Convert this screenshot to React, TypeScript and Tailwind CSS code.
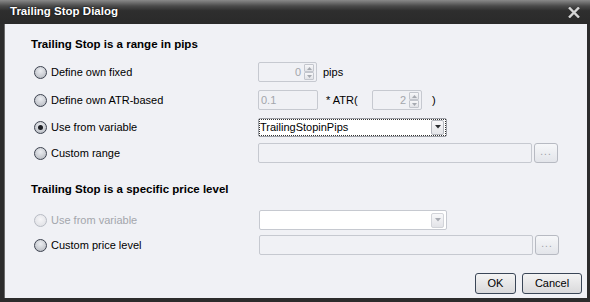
import React from "react";

const font = { fontFamily: '"Liberation Sans", Arial, sans-serif' };

function Radio({ checked = false, disabled = false }: { checked?: boolean; disabled?: boolean }) {
  return (
    <div
      className={
        "w-[13px] h-[13px] rounded-full border flex items-center justify-center shrink-0 " +
        (disabled
          ? "border-[#b8bcc4] bg-[radial-gradient(circle_at_50%_40%,#f6f6f8,#dcdde2)]"
          : "border-[#3d4350] bg-[radial-gradient(circle_at_50%_35%,#eceef2_0%,#c3c6cc_70%,#9ea2aa_100%)]")
      }
    >
      {checked && <div className="w-[5px] h-[5px] rounded-full bg-[#1d1f24]" />}
    </div>
  );
}

function SpinButtons() {
  return (
    <div className="flex flex-col gap-0 mr-[2px]">
      {[0, 1].map((i) => (
        <div
          key={i}
          className="w-[10px] h-[8px] border border-[#c3c6cd] rounded-[1px] bg-gradient-to-b from-[#f7f7f9] to-[#e2e3e7] flex items-center justify-center"
        >
          <svg width="5" height="3" viewBox="0 0 5 3">
            {i === 0 ? (
              <path d="M0 3 L2.5 0 L5 3 Z" fill="#a6a9b0" />
            ) : (
              <path d="M0 0 L2.5 3 L5 0 Z" fill="#a6a9b0" />
            )}
          </svg>
        </div>
      ))}
    </div>
  );
}

function SpinBox({ value, w }: { value: string; w: string }) {
  return (
    <div className={`${w} h-[20px] border border-[#c6c9d0] rounded-[2px] flex items-center justify-end bg-[#f0f1f5]`}>
      <span className="text-[#a3a6ac] text-[11px] mr-[3px]">{value}</span>
      <SpinButtons />
    </div>
  );
}

function DropArrow({ disabled = false }: { disabled?: boolean }) {
  return (
    <div
      className={
        "w-[13px] h-[15px] border rounded-[2px] flex items-center justify-center bg-gradient-to-b from-[#f8f8fa] to-[#e3e4e8] " +
        (disabled ? "border-[#d2d4d9]" : "border-[#b4b7be]")
      }
    >
      <svg width="6" height="4" viewBox="0 0 6 4">
        <path d="M0 0 L6 0 L3 3.5 Z" fill={disabled ? "#a9acb3" : "#2a2c30"} />
      </svg>
    </div>
  );
}

function Row({
  label,
  checked,
  disabled,
  className,
  children,
}: {
  label: string;
  checked?: boolean;
  disabled?: boolean;
  className?: string;
  children?: React.ReactNode;
}) {
  return (
    <div className={"flex items-center h-[20px] " + (className ?? "")}>
      <div className="w-[224px] flex items-center gap-[4px] shrink-0">
        <Radio checked={checked} disabled={disabled} />
        <span className={"text-[11px] " + (disabled ? "text-[#a3a6ac]" : "text-black")}>{label}</span>
      </div>
      {children}
    </div>
  );
}

function EllipsisBtn() {
  return (
    <div className="w-[24px] h-[20px] ml-[2px] border border-[#b7bac2] rounded-[3px] bg-gradient-to-b from-[#f6f7f9] to-[#e3e5ea] flex items-center justify-center">
      <span className="text-[#9a9da5] text-[10px] leading-none tracking-[1px] -mt-[2px]">...</span>
    </div>
  );
}

function WideInput() {
  return <div className="w-[274px] h-[20px] border border-[#c6c9d0] rounded-[2px] bg-[#f0f1f5]" />;
}

export default function App() {
  return (
    <div className="w-[590px] h-[302px] flex flex-col bg-[#2c2c2c]" style={font}>
      <div className="h-[24px] shrink-0 flex items-center justify-between pl-[10px] pr-[10px] bg-[linear-gradient(to_bottom,#8a8a8a_0%,#4a4a4a_25%,#2e2e2e_45%,#2a2a2a_100%)]">
        <span className="text-white font-bold text-[11.5px] [text-shadow:0_0_2px_#000]">Trailing Stop Dialog</span>
        <svg width="12" height="11" viewBox="0 0 12 11" className="mt-[1px]">
          <path d="M1 0.5 L11 10.5 M11 0.5 L1 10.5" stroke="#d6d6d6" strokeWidth="2.4" />
        </svg>
      </div>
      <div className="flex-1 ml-[4px] mr-[3px] mb-[4px] bg-[#f0f1f5] border-l border-[#6a6a6a] pl-[29px] pr-[5px] pt-[13px] flex flex-col">
        <div className="font-bold text-[11.5px] leading-[14px] text-black -ml-[3px]">Trailing Stop is a range in pips</div>

        <Row label="Define own fixed" className="mt-[11px]">
          <SpinBox value="0" w="w-[59px]" />
          <span className="text-[11px] ml-[6px]">pips</span>
        </Row>

        <Row label="Define own ATR-based" className="mt-[8px]">
          <div className="w-[60px] h-[20px] border border-[#c6c9d0] rounded-[2px] flex items-center bg-[#f0f1f5]">
            <span className="text-[#a3a6ac] text-[11px] ml-[2px]">0.1</span>
          </div>
          <span className="text-[11px] ml-[8px] w-[46px]">* ATR(</span>
          <SpinBox value="2" w="w-[50px]" />
          <span className="text-[11px] ml-[10px]">)</span>
        </Row>

        <Row label="Use from variable" checked className="mt-[7px]">
          <div className="w-[189px] h-[19px] border border-[#9ea1a8] rounded-[2px] bg-white">
            <div className="w-full h-full border border-dotted border-[#333] flex items-center justify-between pr-[1px]">
              <span className="text-[11px] text-black">TrailingStopinPips</span>
              <DropArrow />
            </div>
          </div>
        </Row>

        <Row label="Custom range" className="mt-[6px]">
          <WideInput />
          <EllipsisBtn />
        </Row>

        <div className="font-bold text-[11.5px] leading-[14px] text-black mt-[19px] -ml-[3px]">
          Trailing Stop is a specific price level
        </div>

        <Row label="Use from variable" disabled className="mt-[14px]">
          <div className="ml-[1px] w-[188px] h-[20px] border border-[#c6c9d0] rounded-[2px] bg-white flex items-center justify-end pr-[2px]">
            <DropArrow disabled />
          </div>
        </Row>

        <Row label="Custom price level" className="mt-[5px]">
          <div className="ml-[1px]">
            <WideInput />
          </div>
          <EllipsisBtn />
        </Row>

        <div className="flex justify-end gap-[6px] mt-[18px]">
          <button className="w-[41px] h-[21px] border border-[#3a4657] rounded-[3px] bg-gradient-to-b from-[#f4f4f4] to-[#d9d9db] text-[11px] text-black">
            OK
          </button>
          <button className="w-[60px] h-[21px] border border-[#3a4657] rounded-[3px] bg-gradient-to-b from-[#f4f4f4] to-[#d9d9db] text-[11px] text-black">
            Cancel
          </button>
        </div>
      </div>
    </div>
  );
}
